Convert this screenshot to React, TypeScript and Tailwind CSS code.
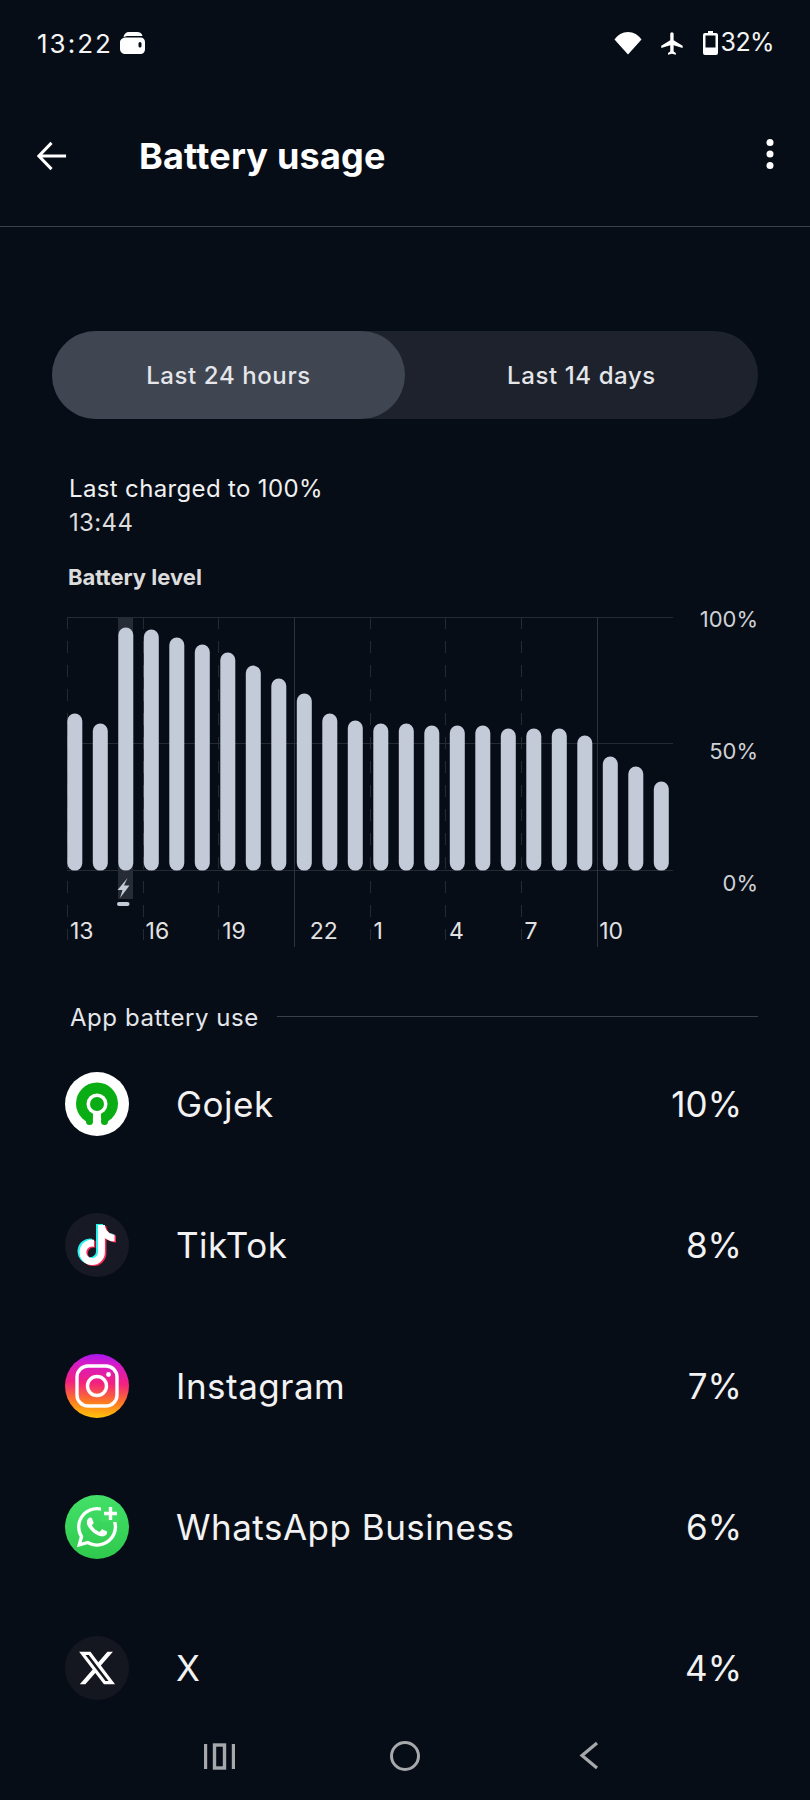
import React from 'react';
import { FaTiktok, FaXTwitter, FaWhatsapp } from 'react-icons/fa6';

const levels = [157, 147, 243, 241, 233, 226, 218, 205, 192, 177, 157, 150, 147, 147, 145, 145, 145, 142, 142, 142, 135, 114, 104, 89];
const dashed = [0.5, 76.5, 151.5, 303.5, 378.5, 454.5];
const solid = [227.5, 530.5];

const BatteryChart = () => (
  <svg width="606" height="330" viewBox="0 0 606 330" className="block">
    <rect x="51" y="0" width="15" height="282" fill="#262b35" />
    {[0.5, 126.5, 253.5].map((y) => (
      <line key={y} x1="0" x2="606" y1={y} y2={y} stroke="#252a34" />
    ))}
    {dashed.map((x) => (
      <line key={x} x1={x} x2={x} y1="0" y2="323" stroke="#252a34" strokeDasharray="12 12" />
    ))}
    {solid.map((x) => (
      <line key={x} x1={x} x2={x} y1="0" y2="330" stroke="#2c313b" />
    ))}
    {levels.map((h, i) => (
      <rect key={i} x={0.3 + i * 25.5} y={253.6 - h} width="15" height={h} rx="7.5" fill="#c3cbd9" />
    ))}
    <path d="M60.500 261 50.500 273h5l-2.500 8 9.500-12.500H57z" fill="#c5cbd6" />
    <rect x="50" y="285" width="12.500" height="4" rx="2" fill="#c3cbd9" />
  </svg>
);

const GojekIcon = () => (
  <svg width="64" height="64" viewBox="0 0 64 64">
    <circle cx="32" cy="32" r="32" fill="#fff" />
    <circle cx="32" cy="31.500" r="21" fill="#0aad14" />
    <path d="M28 38h8v8l2 10H26l2-10z" fill="#fff" />
    <circle cx="24.500" cy="49.500" r="3.500" fill="#0aad14" />
    <circle cx="39.500" cy="49.500" r="3.500" fill="#0aad14" />
    <circle cx="32" cy="32" r="10.500" fill="#fff" />
    <circle cx="32" cy="32" r="7" fill="#0aad14" />
  </svg>
);

const TikTokIcon = () => (
  <div className="relative flex w-16 h-16 items-center justify-center rounded-full bg-[#171a24]">
    <FaTiktok className="absolute w-10 h-10 text-[#25f4ee] -translate-x-[2px] -translate-y-[1px]" />
    <FaTiktok className="absolute w-10 h-10 text-[#fe2c55] translate-x-[1.5px] translate-y-[1px]" />
    <FaTiktok className="absolute w-10 h-10 text-white" />
  </div>
);

const InstagramIcon = () => (
  <svg width="64" height="64" viewBox="0 0 64 64">
    <defs>
      <linearGradient id="ig" x1="0.45" y1="1" x2="0.5" y2="0">
        <stop offset="0" stopColor="#ffc60a" />
        <stop offset="0.25" stopColor="#fd7a22" />
        <stop offset="0.55" stopColor="#f3217f" />
        <stop offset="0.85" stopColor="#d41bc8" />
        <stop offset="1" stopColor="#a818f0" />
      </linearGradient>
    </defs>
    <circle cx="32" cy="32" r="32" fill="url(#ig)" />
    <rect x="12" y="12" width="40" height="40" rx="11" fill="none" stroke="#fff" strokeWidth="3.4" />
    <circle cx="32" cy="32" r="9.5" fill="none" stroke="#fff" strokeWidth="3.4" />
    <circle cx="43.500" cy="20.500" r="2.4" fill="#fff" />
  </svg>
);

const WhatsAppIcon = () => (
  <div className="relative flex w-16 h-16 items-center justify-center rounded-full bg-gradient-to-b from-[#43e068] to-[#2fc94d]">
    <FaWhatsapp className="w-[46px] h-[46px] text-white" />
    <div className="absolute top-[9px] right-[10px] flex w-[18px] h-[18px] items-center justify-center bg-[#3fdc63]">
      <svg width="15" height="15" viewBox="0 0 15 15">
        <path d="M7.500 1v13M1 7.500h13" stroke="#fff" strokeWidth="3.400" />
      </svg>
    </div>
  </div>
);

const XIcon = () => (
  <div className="flex w-16 h-16 items-center justify-center rounded-full bg-[#14171f]">
    <FaXTwitter className="w-10 h-10 text-white" />
  </div>
);

const apps = [
  { name: 'Gojek', pct: '10%', icon: <GojekIcon /> },
  { name: 'TikTok', pct: '8%', icon: <TikTokIcon /> },
  { name: 'Instagram', pct: '7%', icon: <InstagramIcon /> },
  { name: 'WhatsApp Business', pct: '6%', icon: <WhatsAppIcon /> },
  { name: 'X', pct: '4%', icon: <XIcon /> },
];

const hours = [
  { label: '13', cls: 'pl-[3px]' },
  { label: '16', cls: 'pl-[3px]' },
  { label: '19', cls: 'pl-[4px]' },
  { label: '22', cls: 'pl-[16px]' },
  { label: '1', cls: 'pl-[4px]' },
  { label: '4', cls: 'pl-[4px]' },
  { label: '7', cls: 'pl-[4px]' },
  { label: '10', cls: 'pl-[3px]' },
];

export default function App() {
  return (
    <div className="w-[810px] h-[1800px] overflow-hidden bg-[#070d17] text-white font-[Inter,sans-serif] flex flex-col">
      {/* Status bar */}
      <div className="h-[86px] pl-[37px] pr-[36px] flex items-center justify-between">
        <div className="flex items-center gap-[7px]">
          <span className="text-[26px] tracking-[2px] text-[#f4f4f4]">13:22</span>
          <svg width="25" height="22" viewBox="0 0 25 22">
            <path d="M3.500 5C4 2 6 0 9 0h8c3 0 5 1.500 5.500 4H9C7 4 5 4.500 3.500 5z" fill="#fff" />
            <path d="M6 5.500h14.500c2.500 0 4.500 2 4.500 4.500v7.500c0 2.500-2 4.500-4.500 4.500H5c-2.800 0-5-2.200-5-5V10c0-2.500 3-4.500 6-4.500z" fill="#fff" />
            <rect x="18.500" y="10" width="3" height="5.500" rx="1.500" fill="#070d17" />
          </svg>
        </div>
        <div className="flex items-center">
          <svg width="30" height="26" viewBox="0 0 30 24" className="mr-[16px]">
            <path d="M15 23.500 1.500 8.500C4.500 4 9.500 1 15 1s10.500 3 13.500 7.500z" fill="#fff" />
          </svg>
          <svg width="27" height="27" viewBox="0 0 24 24" className="mr-[17px]">
            <path d="M21 16v-2l-8-5V3.500c0-.83-.67-1.500-1.500-1.500S10 2.670 10 3.500V9l-8 5v2l8-2.500V19l-2 1.500V22l3.500-1 3.500 1v-1.500L13 19v-5.500l8 2.500z" fill="#fff" />
          </svg>
          <svg width="15" height="24" viewBox="0 0 15 24" className="mr-[3px]">
            <path d="M5 0h5v2h3a2 2 0 0 1 2 2v18a2 2 0 0 1-2 2H2a2 2 0 0 1-2-2V4a2 2 0 0 1 2-2h3z" fill="#fff" />
            <rect x="2.500" y="4.500" width="10" height="12" fill="#070d17" />
          </svg>
          <span className="text-[25px] tracking-[-0.6px] text-[#f4f4f4]">32%</span>
        </div>
      </div>

      {/* Header */}
      <div className="h-[141px] border-b border-[#3c3f49] flex items-center pl-[37px] pr-[35px] pb-[1px]">
        <svg width="30" height="30" viewBox="0 0 32 32" className="mr-[72px]">
          <path d="M31 16H3M15.500 2 2 16l13.500 14" fill="none" stroke="#fff" strokeWidth="3.200" />
        </svg>
        <h1 className="text-[36px] font-bold tracking-[0.2px] flex-1 leading-none">Battery usage</h1>
        <svg width="10" height="32" viewBox="0 0 10 32" className="mt-[-3px]">
          <circle cx="5" cy="4.500" r="3.500" fill="#fff" />
          <circle cx="5" cy="16" r="3.500" fill="#fff" />
          <circle cx="5" cy="27.500" r="3.500" fill="#fff" />
        </svg>
      </div>

      {/* Range tabs */}
      <div className="mt-[104px] mx-[52px] w-[706px] h-[88px] rounded-full bg-[#1d222c] flex text-[24px] font-medium tracking-[0.6px] text-[#e4e6ea]">
        <div className="w-[353px] pt-[2px] rounded-full bg-[#3f4551] flex items-center justify-center">Last 24 hours</div>
        <div className="w-[353px] pt-[2px] flex items-center justify-center">Last 14 days</div>
      </div>

      {/* Last charged */}
      <div className="mt-[53px] pl-[69px] text-[24px] leading-[34px] tracking-[0.35px] text-[#f0f0f0]">
        <div>Last charged to 100%</div>
        <div className="text-[#dddddd]">13:44</div>
      </div>
      <div className="mt-[23px] pl-[68px] text-[22px] leading-[28px] font-bold text-[#dcdcdc]">Battery level</div>

      {/* Chart */}
      <div className="mt-[26px] pl-[67px] flex h-[330px]">
        <div className="relative w-[606px]">
          <BatteryChart />
          <div className="absolute left-0 top-[299px] grid grid-cols-[repeat(8,75.6px)] text-[23px] leading-[30px] text-[#e2e2e2]">
            {hours.map((h) => (
              <span key={h.label} className={h.cls}>{h.label}</span>
            ))}
          </div>
        </div>
        <div className="flex-1 pr-[52px] flex flex-col items-end gap-[102px] text-[22px] leading-[30px] text-[#cfd1d6] mt-[-13px]">
          <span>100%</span>
          <span>50%</span>
          <span>0%</span>
        </div>
      </div>

      {/* App list */}
      <div className="mt-[56px] pl-[70px] pr-[52px] flex items-center gap-[18px]">
        <span className="text-[24px] leading-[30px] text-[#e4e6ea] tracking-[0.55px]">App battery use</span>
        <div className="flex-1 h-[1px] bg-[#3c3f49] mt-[-3px]"></div>
      </div>
      <div className="mt-[39px] pl-[65px] pr-[68px] flex flex-col gap-[77px]">
        {apps.map((app) => (
          <div key={app.name} className="h-16 flex items-center">
            <div className="w-[111px]">{app.icon}</div>
            <span className="flex-1 text-[35px] tracking-[0.5px] text-[#f2f2f2]">{app.name}</span>
            <span className="text-[35px] text-[#f2f2f2]">{app.pct}</span>
          </div>
        ))}
      </div>

      {/* Nav bar */}
      <div className="mt-auto h-[90px] relative">
        <div className="absolute left-0 top-0 w-full h-full flex items-start pt-[30px] pl-[204px]">
          <svg width="31" height="30" viewBox="0 0 31 30" className="mt-[1px]">
            <path d="M1.500 3v25M29.500 3v25" stroke="#a6a8ac" strokeWidth="3.400" />
            <rect x="10.500" y="4" width="10" height="23" fill="none" stroke="#a6a8ac" strokeWidth="3.400" />
          </svg>
          <svg width="32" height="32" viewBox="0 0 32 32" className="ml-[154px]">
            <circle cx="16" cy="16" r="13.500" fill="none" stroke="#a6a8ac" strokeWidth="3" />
          </svg>
          <svg width="20" height="30" viewBox="0 0 20 30" className="ml-[158px] mt-[1px]">
            <path d="M18 2 3 14.500 18 27" fill="none" stroke="#a6a8ac" strokeWidth="3.200" />
          </svg>
        </div>
      </div>
    </div>
  );
}
